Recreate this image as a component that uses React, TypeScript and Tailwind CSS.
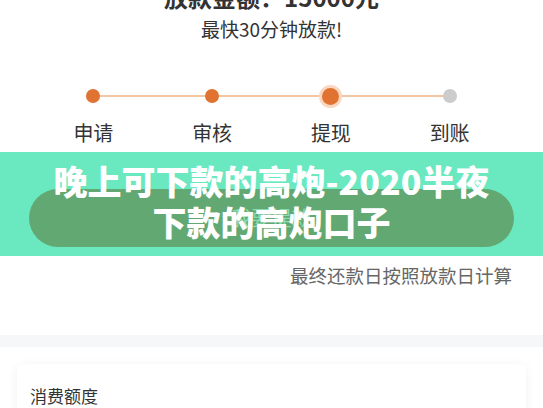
const steps = ["申请", "审核", "提现", "到账"];

function StepDot({ index }: { index: number }) {
  if (index === 2) {
    return (
      <span className="w-[17px] h-[17px] rounded-full bg-[#e07232] ring-[3px] ring-[#f9d7c0]" />
    );
  }
  if (index === 3) {
    return <span className="w-[14px] h-[14px] rounded-full bg-[#cccccc]" />;
  }
  return <span className="w-[14px] h-[14px] rounded-full bg-[#e07232]" />;
}

export default function App() {
  return (
    <div className="relative w-[543px] h-[408px] overflow-hidden bg-white font-['Noto_Sans_CJK_SC','Noto_Sans',sans-serif]">
      {/* amount header */}
      <h1 className="mt-[-18px] text-center text-[24px] leading-[30px] font-bold text-[#333]">
        放款金额：15000元
      </h1>
      <p className="mt-[4px] text-center text-[19px] leading-[26px] text-[#333]">
        最快30分钟放款!
      </p>

      {/* progress steps */}
      <div className="relative mx-[34px] mt-[47px]">
        <div className="absolute left-[59px] right-[59px] top-[6px] h-[2px] bg-[#f2c6a3]" />
        <div className="relative grid grid-cols-4">
          {steps.map((s, i) => (
            <div key={s} className="flex flex-col items-center">
              <div className="h-[14px] flex items-center justify-center">
                <StepDot index={i} />
              </div>
              <span className="mt-[16px] text-[20px] leading-[28px] text-[#333]">{s}</span>
            </div>
          ))}
        </div>
      </div>

      {/* banner */}
      <div className="relative mt-[5px] h-[104px] bg-[#6ae8bf] px-[29px] pt-[37px]">
        <button className="w-full h-[58px] rounded-full bg-[#62a873] text-[20px] text-[#86dcb1]">
          我要提款
        </button>
        <div className="absolute inset-0 flex flex-col items-center pt-[8px] text-[34px] leading-[41px] font-black text-white">
          <span>晚上可下款的高炮-2020半夜</span>
          <span>下款的高炮口子</span>
        </div>
      </div>

      <p className="mt-[8px] pr-[31px] text-right text-[18.5px] leading-[22px] text-[#666]">
        最终还款日按照放款日计算
      </p>

      <div className="mt-[49px] h-[12px] bg-[#f6f7f9]" />

      {/* quota card */}
      <div className="mx-[17px] mt-[17px] h-[80px] rounded-[6px] bg-white px-[13px] pt-[20px] shadow-[0_2px_12px_rgba(0,0,0,0.06)]">
        <span className="text-[17px] leading-[24px] text-[#333]">消费额度</span>
      </div>
    </div>
  );
}
